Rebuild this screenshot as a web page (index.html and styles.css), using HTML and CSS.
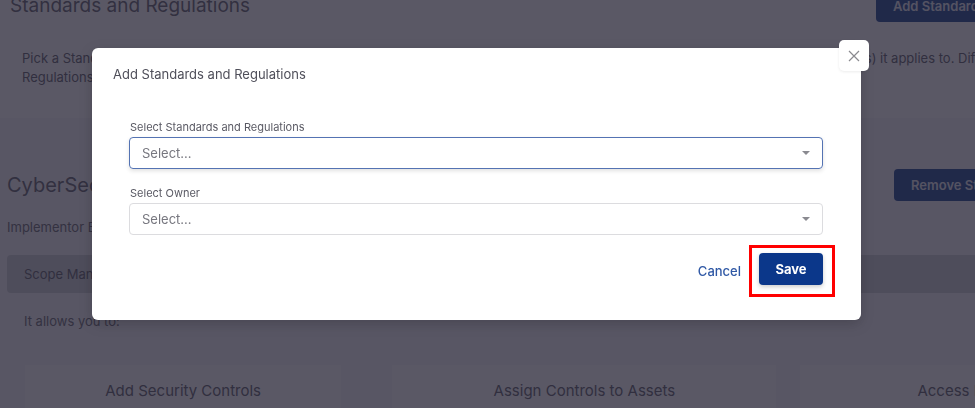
FILE: index.html
```html
<!DOCTYPE html>
<html lang="en">
<head>
<meta charset="utf-8">
<title>Add Standards and Regulations</title>
<link rel="stylesheet" href="styles.css">
</head>
<body>
<div class="page">
  <section class="top">
    <header class="top-head">
      <h1 class="page-title">Standards and Regulations</h1>
      <button class="btn-primary">Add Standards and Regulations</button>
    </header>
    <p class="desc">Pick a Standard and Regulation from the list, then pick the owner and the scope of assets that the standard applies to for one user (asset(s) it applies to. Different owners can be assigned<br>Regulations can be removed at any time from the list below.</p>
  </section>
  <section class="mid">
    <header class="mid-head">
      <h2 class="sec-title">CyberSecurity Framework</h2>
      <button class="btn-primary">Remove Standard</button>
    </header>
    <p class="owner">Implementor Email: owner@example.com</p>
    <div class="scope">Scope Management</div>
    <p class="allows">It allows you to:</p>
    <div class="cards">
      <div class="card c1">Add Security Controls</div>
      <div class="card c2">Assign Controls to Assets</div>
      <div class="card c3">Access Reports</div>
    </div>
  </section>
</div>

<div class="overlay">
  <div class="modal">
    <button class="close" aria-label="Close">
      <svg width="12" height="12" viewBox="0 0 12 12"><path d="M1 1L11 11M11 1L1 11" stroke="#8a8a8f" stroke-width="1.2" fill="none"/></svg>
    </button>
    <h3 class="modal-title">Add Standards and Regulations</h3>
    <div class="modal-body">
      <label class="field">
        <span class="label">Select Standards and Regulations</span>
        <span class="select focused">
          <span class="placeholder">Select...</span>
          <span class="caret"></span>
        </span>
      </label>
      <label class="field">
        <span class="label">Select Owner</span>
        <span class="select">
          <span class="placeholder">Select...</span>
          <span class="caret"></span>
        </span>
      </label>
    </div>
    <footer class="modal-foot">
      <button class="cancel">Cancel</button>
      <span class="highlight"><button class="save">Save</button></span>
    </footer>
  </div>
</div>
</body>
</html>
```
FILE: styles.css
```css
* { box-sizing: border-box; }
html, body { margin: 0; padding: 0; }
body {
  width: 975px;
  height: 408px;
  overflow: hidden;
  font-family: Inter, "Noto Sans", sans-serif;
  background: #f6f6f8;
  color: #4a4a55;
}
button { font-family: inherit; border: 0; cursor: pointer; }
.page { width: 1120px; }

.top { display: flow-root; background: #ffffff; height: 118px; padding-left: 10px; }
.top-head {
  display: grid;
  grid-template-columns: 866px auto;
  align-items: center;
  height: 33px;
  margin-top: -11px;
}
.page-title { margin: 0; font-size: 19px; font-weight: 400; color: #5a5a66; }
.btn-primary {
  background: #0e3a8c;
  color: #e4e8f2;
  font-size: 13px;
  font-weight: 600;
  height: 33px;
  padding: 0 17px;
  border-radius: 4px;
  white-space: nowrap;
  justify-self: start;
}
.desc {
  margin: 27px 0 0 12px;
  font-size: 13px;
  line-height: 19px;
  white-space: nowrap;
  color: #55555f;
}

.mid { padding-left: 7px; }
.mid-head {
  display: grid;
  grid-template-columns: 887px auto;
  align-items: center;
  height: 32px;
  margin-top: 51px;
}
.sec-title { margin: 0; font-size: 20px; font-weight: 400; color: #5a5a66; }
.mid .btn-primary { height: 32px; }
.owner { margin: 17px 0 0; font-size: 13px; line-height: 18px; color: #60606a; }
.scope {
  margin-top: 19px;
  height: 38px;
  background: #ccd0d3;
  border-radius: 4px;
  padding-left: 17px;
  display: flex;
  align-items: center;
  font-size: 13px;
  color: #55555f;
}
.allows { margin: 19px 0 0 17px; font-size: 13px; line-height: 18px; color: #60606a; }
.cards { display: flex; margin-top: 35px; padding-left: 18px; }
.card {
  background: #fdfdff;
  height: 80px;
  padding-top: 16px;
  text-align: center;
  font-size: 15px;
  color: #55555f;
}
.c1 { width: 317px; }
.c2 { width: 385px; margin-left: 51px; }
.c3 { width: 320px; margin-left: 24px; padding-left: 117px; text-align: left; }

.overlay {
  position: fixed;
  inset: 0;
  background: rgba(38, 36, 52, 0.76);
}
.modal {
  position: relative;
  width: 769px;
  height: 272px;
  margin: 48px 0 0 92px;
  background: #ffffff;
  border-radius: 6px;
  box-shadow: 0 4px 14px rgba(0, 0, 0, 0.18);
  padding: 18px 38px 0 37px;
}
.close {
  position: absolute;
  top: -8px;
  right: -8px;
  width: 30px;
  height: 31px;
  background: #ffffff;
  border-radius: 5px;
  display: flex;
  align-items: center;
  justify-content: center;
  padding: 0;
  box-shadow: 0 1px 3px rgba(0, 0, 0, 0.08);
}
.modal-title {
  margin: 0 0 0 -16px;
  font-size: 13px;
  line-height: 16px;
  font-weight: 400;
  color: #4f4f5a;
}
.modal-body { margin-top: 38px; display: flex; flex-direction: column; gap: 17px; }
.field { display: flex; flex-direction: column; gap: 3px; }
.label { font-size: 11px; line-height: 14px; color: #5a5a64; padding-left: 1px; }
.select {
  height: 32px;
  border: 1px solid #dcdcdf;
  border-radius: 4px;
  display: flex;
  align-items: center;
  justify-content: space-between;
  padding: 0 12px 0 12px;
}
.select.focused {
  border-color: #5473b3;
  box-shadow: 0 2px 4px rgba(0, 0, 0, 0.12);
}
.placeholder { font-size: 13px; color: #77777f; }
.caret {
  width: 0;
  height: 0;
  border-left: 4px solid transparent;
  border-right: 4px solid transparent;
  border-top: 4px solid #8a8a90;
}
.modal-foot {
  display: flex;
  justify-content: flex-end;
  align-items: center;
  margin-top: 10px;
  margin-right: -12px;
}
.cancel {
  background: none;
  color: #2f58a5;
  font-size: 13px;
  font-weight: 500;
  padding: 0;
  margin-right: 8px;
}
.highlight {
  border: 3px solid #ff0000;
  padding: 5px 9px 9px 7px;
  display: flex;
}
.save {
  width: 64px;
  height: 32px;
  background: #0b378a;
  color: #ffffff;
  font-size: 13px;
  font-weight: 700;
  border-radius: 4px;
  box-shadow: 0 2px 4px rgba(0, 0, 0, 0.2);
}
```
